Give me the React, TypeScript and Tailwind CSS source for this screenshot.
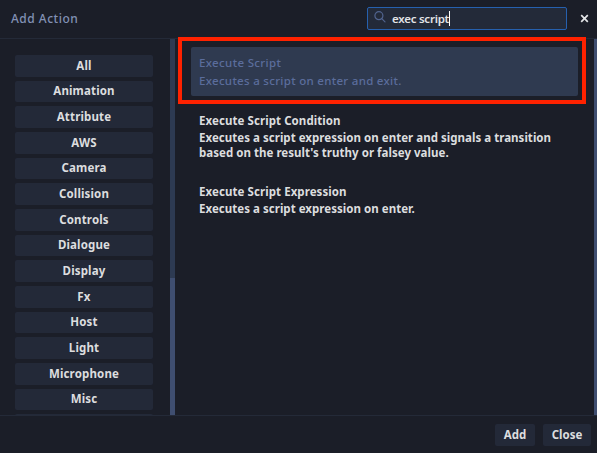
const categories = [
  'All', 'Animation', 'Attribute', 'AWS', 'Camera', 'Collision', 'Controls', 'Dialogue',
  'Display', 'Fx', 'Host', 'Light', 'Microphone', 'Misc',
];

function SearchIcon() {
  return (
    <svg className="h-3 w-3 shrink-0" viewBox="0 0 12 12" fill="none" stroke="#51648f" strokeWidth="1.2">
      <circle cx="4.9" cy="4.7" r="4" />
      <path d="M7.8 7.6L11 10.8" strokeLinecap="round" />
    </svg>
  );
}

function Header() {
  return (
    <header className="flex h-[39px] shrink-0 items-start border-b border-[#242a38] pl-[11px]">
      <h1 className="mt-[10px] flex-1 text-[12px] leading-[18px] font-medium tracking-[0.5px] text-[#8291b5]">Add Action</h1>
      <div className="mt-[7px] flex h-[23px] w-[200px] items-center rounded-[2px] border border-[#2660ae] bg-[#232a39] pl-[6px]">
        <div className="-mt-[3px]"><SearchIcon /></div>
        <span className="mt-px ml-[6px] text-[11.5px] leading-[18px] font-semibold tracking-[-0.25px] text-[#e1e3e6]">exec script</span>
        <span className="h-[15px] w-px bg-white" />
      </div>
      <svg className="mt-[14px] mr-[8px] ml-[13px] h-[9px] w-[9px]" viewBox="0 0 9 9" stroke="#e4e6e8" strokeWidth="1.7">
        <path d="M1.2 1.2L7.8 7.8M7.8 1.2L1.2 7.8" />
      </svg>
    </header>
  );
}

export default function App() {
  return (
    <div className="flex h-[453px] w-[597px] flex-col overflow-hidden bg-[#1b1e28] font-['Noto_Sans',sans-serif] text-[11.5px] text-[#dcdddf]">
      <Header />
      <main className="flex h-[376px] shrink-0">
        <nav className="flex w-[170px] shrink-0 flex-col gap-[4px] overflow-hidden pt-[16px] pr-[17px] pl-[15px]">
          {categories.map((name) => (
            <button key={name} className="h-[21.67px] shrink-0 rounded-[2px] bg-[#232938] leading-[20px] font-bold tracking-[0.15px]">
              {name}
            </button>
          ))}
          <div className="h-[21.67px] shrink-0 rounded-[2px] bg-[#232938]" />
        </nav>
        <div className="w-[5px] shrink-0 bg-[#2d3a52] pt-[239px]">
          <div className="h-[137px] bg-[#3f4e70]" />
        </div>
        <section className="min-w-0 flex-1 pl-[3px]">
          <div className="-mt-[2px] h-[67px] w-[408px] border-4 border-[#ff2200] px-[9px] pt-[6px] pr-[4px]">
            <div className="h-[49px] rounded-[2px] bg-[#2f3a50] pt-[7px] pl-[8px] leading-[18px] font-medium text-[#5b6d9c]">
              <div className="tracking-[0.35px]">Execute Script</div>
              <div className="tracking-[0.3px]">Executes a script on enter and exit.</div>
            </div>
          </div>
          <div className="pt-[8px] pl-[21px] leading-[15px] font-bold">
            <div className="leading-[17px] tracking-[0.07px]">Execute Script Condition</div>
            <div className="mt-px tracking-[0.03px]">Executes a script expression on enter and signals a transition</div>
            <div className="tracking-[0.03px]">based on the result's truthy or falsey value.</div>
            <div className="mt-[23px] leading-[17px] tracking-[0.07px]">Execute Script Expression</div>
            <div className="mt-px tracking-[0.03px]">Executes a script expression on enter.</div>
          </div>
        </section>
        <div className="w-[3px] shrink-0 bg-[#3f4e70]" />
      </main>
      <footer className="flex h-[38px] shrink-0 justify-end gap-[8px] border-t border-[#242a38] pt-[8px] pr-[6px]">
        <button className="h-[22px] w-[40px] rounded-[2px] bg-[#232938] font-bold">Add</button>
        <button className="h-[22px] w-[48px] rounded-[2px] bg-[#232938] font-bold">Close</button>
      </footer>
    </div>
  );
}
